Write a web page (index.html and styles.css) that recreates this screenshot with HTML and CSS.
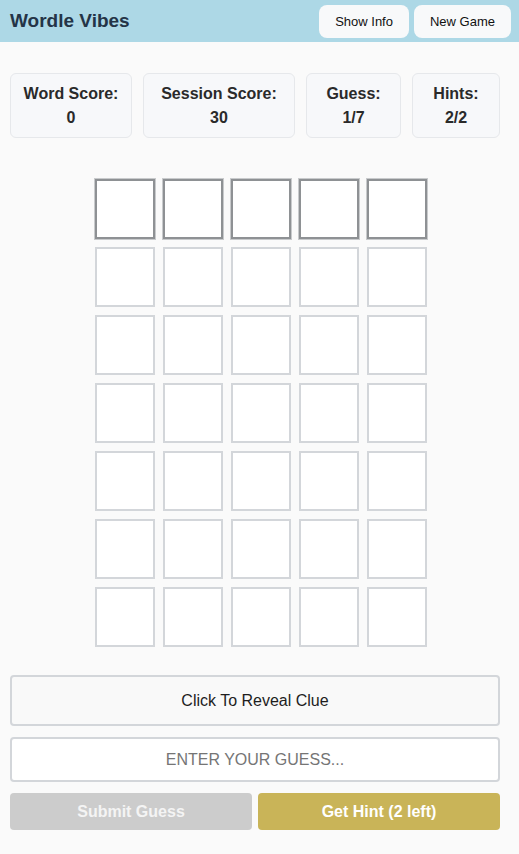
FILE: index.html
```html
<!DOCTYPE html>
<html lang="en">
<head>
<meta charset="utf-8">
<title>Wordle Vibes</title>
<link rel="stylesheet" href="styles.css">
</head>
<body>
<header class="topbar">
  <h1 class="title">Wordle Vibes</h1>
  <div class="top-actions">
    <button class="top-btn">Show Info</button>
    <button class="top-btn">New Game</button>
  </div>
</header>
<main class="main">
  <section class="stats">
    <div class="stat"><div>Word Score:</div><div>0</div></div>
    <div class="stat"><div>Session Score:</div><div>30</div></div>
    <div class="stat"><div>Guess:</div><div>1/7</div></div>
    <div class="stat"><div>Hints:</div><div>2/2</div></div>
  </section>
  <section class="board">
    <div class="row active"><div class="tile"></div><div class="tile"></div><div class="tile"></div><div class="tile"></div><div class="tile"></div></div>
    <div class="row"><div class="tile"></div><div class="tile"></div><div class="tile"></div><div class="tile"></div><div class="tile"></div></div>
    <div class="row"><div class="tile"></div><div class="tile"></div><div class="tile"></div><div class="tile"></div><div class="tile"></div></div>
    <div class="row"><div class="tile"></div><div class="tile"></div><div class="tile"></div><div class="tile"></div><div class="tile"></div></div>
    <div class="row"><div class="tile"></div><div class="tile"></div><div class="tile"></div><div class="tile"></div><div class="tile"></div></div>
    <div class="row"><div class="tile"></div><div class="tile"></div><div class="tile"></div><div class="tile"></div><div class="tile"></div></div>
    <div class="row"><div class="tile"></div><div class="tile"></div><div class="tile"></div><div class="tile"></div><div class="tile"></div></div>
  </section>
  <section class="controls">
    <div class="clue">Click To Reveal Clue</div>
    <input class="guess" type="text" placeholder="ENTER YOUR GUESS...">
    <div class="actions">
      <button class="act submit">Submit Guess</button>
      <button class="act hint">Get Hint (2 left)</button>
    </div>
  </section>
</main>
</body>
</html>
```
FILE: styles.css
```css
* { box-sizing: border-box; }
html, body { margin: 0; padding: 0; }
body {
  background: #fafafa;
  font-family: "Liberation Sans", Arial, sans-serif;
  color: #222;
  width: 519px;
  height: 854px;
  overflow: hidden;
}
.topbar {
  height: 42px;
  background: #add8e6;
  display: flex;
  align-items: center;
  justify-content: space-between;
  padding: 0 8px 0 10px;
}
.title {
  margin: 0;
  font-size: 19px;
  font-weight: bold;
  color: #243447;
}
.top-actions { display: flex; gap: 5px; }
.top-btn {
  height: 33px;
  padding: 0 16px;
  border: none;
  border-radius: 8px;
  background: #f8f9fa;
  font-family: "Liberation Sans", Arial, sans-serif;
  font-size: 13px;
  color: #111;
}
.main { padding: 31px 19px 0 10px; }
.stats {
  display: grid;
  grid-template-columns: 122fr 152fr 95fr 88fr;
  gap: 11px;
}
.stat {
  background: #f7f8fa;
  border: 1px solid #e6e8eb;
  border-radius: 6px;
  padding: 8px 0 7px;
  text-align: center;
  font-weight: bold;
  font-size: 16px;
  line-height: 24px;
  color: #2a2a2a;
}
.board {
  margin-top: 41px;
  display: flex;
  flex-direction: column;
  align-items: center;
  gap: 8px;
  padding-left: 12px;
}
.row { display: flex; gap: 8px; }
.tile {
  width: 60px;
  height: 60px;
  background: #fff;
  border: 2px solid #d3d6da;
}
.row.active .tile {
  border-color: #8e9194;
  box-shadow: 0 0 0 1px #c8cacc;
}
.controls {
  margin-top: 28px;
  display: flex;
  flex-direction: column;
  gap: 11px;
}
.clue {
  height: 51px;
  border: 2px solid #d3d6da;
  border-radius: 4px;
  display: flex;
  align-items: center;
  justify-content: center;
  font-size: 16px;
  color: #1e1e1e;
  background: #f9f9f9;
}
.guess {
  height: 45px;
  width: 100%;
  border: 2px solid #d3d6da;
  border-radius: 4px;
  background: #fff;
  text-align: center;
  font-family: "Liberation Sans", Arial, sans-serif;
  font-size: 16px;
  outline: none;
}
.guess::placeholder { color: #757575; }
.actions { display: flex; gap: 6px; }
.act {
  flex: 1;
  height: 37px;
  border: none;
  border-radius: 4px;
  font-family: "Liberation Sans", Arial, sans-serif;
  font-size: 16px;
  font-weight: bold;
  color: #fff;
}
.submit { background: #cccccc; color: #f4f4f4; }
.hint { background: #c9b458; }
```
